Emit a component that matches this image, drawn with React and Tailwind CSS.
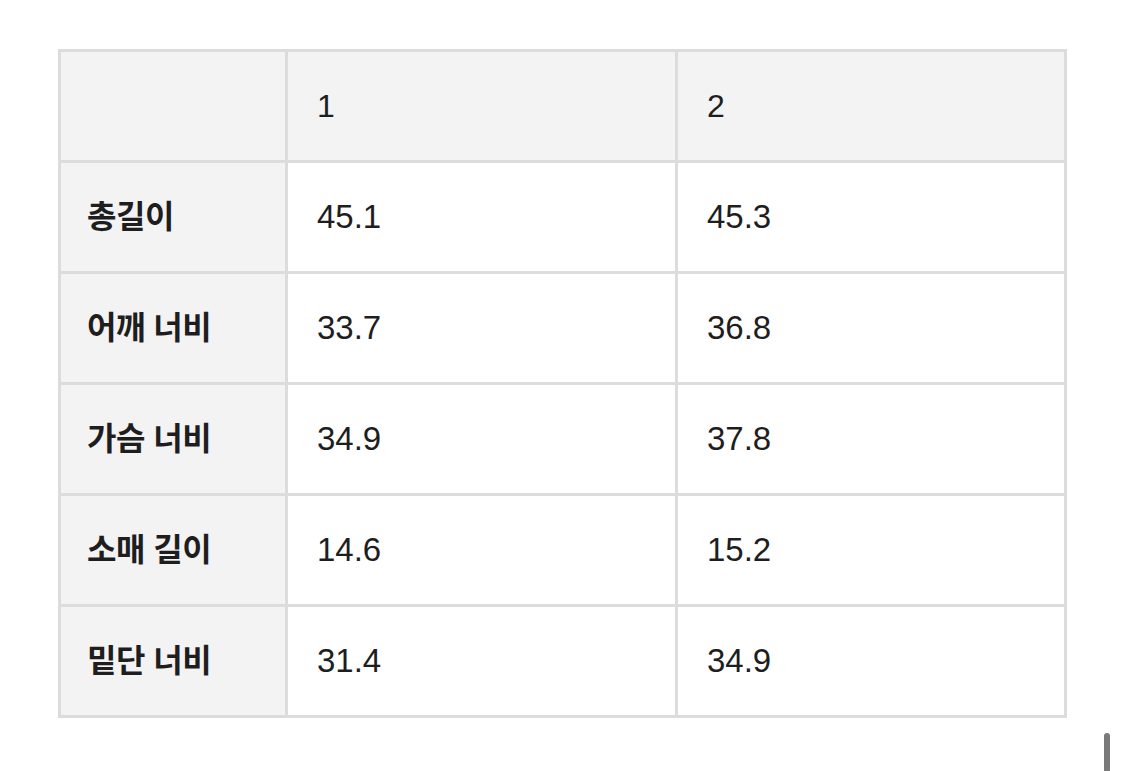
import React from "react";

const rows = [
  ["총길이", "45.1", "45.3"],
  ["어깨 너비", "33.7", "36.8"],
  ["가슴 너비", "34.9", "37.8"],
  ["소매 길이", "14.6", "15.2"],
  ["밑단 너비", "31.4", "34.9"],
];

export default function App() {
  const font = { fontFamily: '"Liberation Sans", "Noto Sans CJK KR", sans-serif' };
  return (
    <div className="relative w-[1125px] h-[771px] bg-white overflow-hidden" style={font}>
      <div className="pt-[49px] pl-[58px]">
        <div className="grid grid-cols-[224px_387px_386px] auto-rows-[108px] gap-[3px] p-[3px] bg-[#dcdcdc] w-[1009px] text-[#1e1e1e]">
          <div className="bg-[#f3f3f3]" />
          <div className="bg-[#f3f3f3] flex items-center px-[29px] text-[32px]">1</div>
          <div className="bg-[#f3f3f3] flex items-center px-[29px] text-[32px]">2</div>
          {rows.map((r) => (
            <React.Fragment key={r[0]}>
              <div className="bg-[#f3f3f3] flex items-center px-[26px] text-[32px] font-bold tracking-[-0.5px]">
                {r[0]}
              </div>
              <div className="bg-white flex items-center px-[29px] text-[33px]">{r[1]}</div>
              <div className="bg-white flex items-center px-[29px] text-[33px]">{r[2]}</div>
            </React.Fragment>
          ))}
        </div>
      </div>
      <div className="absolute left-[1104px] top-[733px] w-[6px] h-[40px] rounded-full bg-[#7a7a7a]" />
    </div>
  );
}
